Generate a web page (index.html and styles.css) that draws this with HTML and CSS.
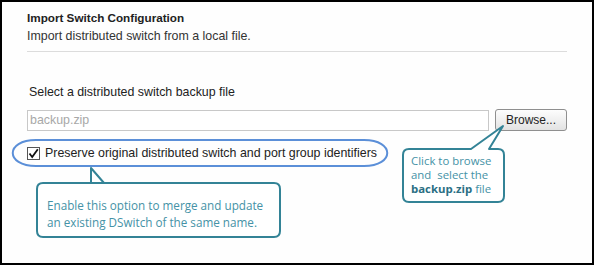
FILE: index.html
```html
<!DOCTYPE html>
<html lang="en">

<head>
    <meta charset="UTF-8" />
    <title>Import Switch Configuration</title>
    <link rel="stylesheet" href="styles.css">
</head>

<body>

<main class="frame">
    <section class="import">
        <h1 class="import__title">Import Switch Configuration</h1>
        <p class="import__desc">Import distributed switch from a local file.</p>

        <div class="import__body">
            <label class="import__label" for="backup-file">Select a distributed switch backup file</label>
            <div class="import__file-row">
                <input class="import__file" id="backup-file" type="text" placeholder="backup.zip" />
                <button class="import__browse" type="button">Browse...</button>
            </div>
            <label class="import__check">
                <span class="import__box">
                    <svg width="11" height="11" viewBox="0 0 11 11"><path d="M1.5 5.5 L4.2 9 L9.8 1.2" fill="none" stroke="#111" stroke-width="1.8"/></svg>
                </span>
                Preserve original distributed switch and port group identifiers
            </label>
        </div>
    </section>

    <!-- annotations drawn over the dialog -->
    <svg class="notes" width="594" height="265" viewBox="0 0 594 265">
        <path d="M36 140 H364 C395 140 395 166 364 166 H36 C5 166 5 140 36 140 Z" fill="none" stroke="#5b8fd8" stroke-width="2"/>
        <path d="M43 183 H104 L91 168 L91 183 M104 183 H274 Q280 183 280 189 V231 Q280 237 274 237 H43 Q37 237 37 231 V189 Q37 183 43 183" fill="#fff" stroke="#338396" stroke-width="2" stroke-linejoin="round"/>
        <path d="M409 149 H471 L503 126 L489 149 H498 Q504 149 504 155 V196 Q504 202 498 202 H409 Q403 202 403 196 V155 Q403 149 409 149 Z" fill="#fff" stroke="#338396" stroke-width="2" stroke-linejoin="round"/>
    </svg>
    <div class="note note--merge">Enable this option to merge and update<br>an existing DSwitch of the same name.</div>
    <div class="note note--browse">Click to browse<br>and&nbsp; select the<br><b>backup.zip</b> file</div>
</main>
</body>
</html>
```

FILE: styles.css
```css
*,
*::before,
*::after {
    box-sizing: border-box;
}

html,
body {
    margin: 0;
    padding: 0;
}

body {
    font-family: 'Liberation Sans', Arial, sans-serif;
    color: #222;
    background: #fff;
}

.frame {
    position: relative;
    width: 594px;
    height: 265px;
    border: 2px solid #000;
    background: #fefefe;
}

.import {
    padding: 8px 25px 0 25px;
}
.import__title {
    margin: 0;
    font-size: 11.7px;
    line-height: 16px;
    font-weight: bold;
    color: #222;
}
.import__desc {
    margin: 2px 0 0;
    font-size: 12.4px;
    line-height: 16px;
    color: #333;
    padding-bottom: 7px;
    border-bottom: 1px solid #dcdcdc;
    width: 540px;
}

.import__body {
    padding-top: 32px;
}
.import__label {
    display: block;
    padding-left: 2px;
    font-size: 12.4px;
    line-height: 16px;
    color: #222;
}
.import__file-row {
    display: flex;
    align-items: center;
    gap: 6px;
    margin-top: 9px;
}
.import__file {
    width: 462px;
    height: 21px;
    border: 1px solid #c8c8c8;
    padding: 0 2px;
    font-family: inherit;
    font-size: 12.4px;
    color: #222;
    background: #fff;
}
.import__file::placeholder {
    color: #a8a8a8;
}
.import__browse {
    width: 72px;
    height: 22px;
    padding: 0;
    border: 1px solid #8f8f8f;
    border-radius: 3px;
    background: linear-gradient(180deg, #fdfdfd 0%, #f0f0f0 50%, #e2e2e2 100%);
    font-family: inherit;
    font-size: 12px;
    color: #222;
}

.import__check {
    display: flex;
    align-items: center;
    gap: 5px;
    margin-top: 14px;
    font-size: 12.4px;
    line-height: 16px;
    color: #222;
}
.import__box {
    display: flex;
    align-items: center;
    justify-content: center;
    width: 13px;
    height: 13px;
    border: 1px solid #555;
    background: #fff;
}

.notes {
    position: absolute;
    top: -2px;
    left: -2px;
    pointer-events: none;
}
.note {
    position: absolute;
    font-family: 'Open Sans', 'Noto Sans', sans-serif;
    font-size: 11.7px;
    color: #4592a6;
}
.note--merge {
    top: 195px;
    left: 45px;
    line-height: 17px;
}
.note--browse {
    top: 152px;
    left: 409px;
    line-height: 14px;
    font-size: 11.4px;
}
.note--browse b {
    font-weight: bold;
    color: #2c6f84;
}
```
